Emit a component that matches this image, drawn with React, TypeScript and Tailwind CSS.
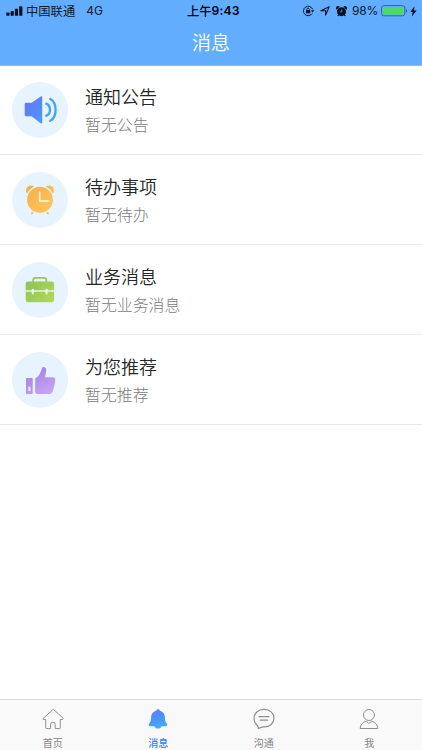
import React from 'react';

const cjk = "font-['Liberation_Sans','Noto_Sans_CJK_SC',sans-serif]";

function StatusBar() {
  return (
    <div className="relative flex h-[22px] items-center justify-between pl-[6px] pr-[5px] text-[12px] leading-[22px] text-[#0b1a2b]">
      <div className="flex items-center">
        <svg width="17" height="10" viewBox="0 0 17 10" fill="#05101c">
          <rect x="0.3" y="6.4" width="3.2" height="3.4" rx="0.9" />
          <rect x="4.6" y="4.9" width="3.2" height="4.9" rx="0.9" />
          <rect x="8.9" y="2.8" width="3.2" height="7" rx="0.9" />
          <rect x="13.2" y="0.3" width="3.2" height="9.5" rx="0.9" />
        </svg>
        <span className="ml-[3px] pt-[2px] text-[12.3px] leading-5">中国联通</span>
        <span className="ml-[11px] font-['Inter',sans-serif] text-[12px]">4G</span>
      </div>
      <div className="absolute left-[187px] top-0 flex font-medium text-black">
        <span className="pt-[2px] text-[12.3px] leading-5">上午</span>
        <span className="font-['Inter',sans-serif] text-[12.2px] font-semibold tracking-[0.15px]">9:43</span>
      </div>
      <div className="flex items-center">
        <svg width="13" height="12" viewBox="0 0 13 12" fill="none" stroke="#05101c">
          <path d="M10.6 4.4A4.7 4.7 0 1 0 10.2 8.4" />
          <path d="M8.9 5.3h3.4l-1.7 2.2z" fill="#05101c" stroke="none" />
          <rect x="4" y="5.1" width="4.2" height="3.2" fill="#05101c" stroke="none" />
          <path d="M4.9 5.2V4.3a1.2 1.2 0 0 1 2.4 0v.9" strokeWidth=".8" />
        </svg>
        <svg className="ml-[5px]" width="10" height="10" viewBox="0 0 10 10" fill="none" stroke="#05101c" strokeWidth="1.1" strokeLinejoin="round">
          <path d="M9.2.8 5.6 9.1V4.7H.9z" />
        </svg>
        <svg className="ml-[6px]" width="11" height="11" viewBox="0 0 12 12" fill="#05101c">
          <circle cx="6" cy="6.2" r="4.9" />
          <path d="M.6 4A2.2 2.2 0 0 1 4 .8zM11.4 4A2.2 2.2 0 0 0 8 .8zM2.200 9.200l1.300 1-1 1-1-.6zM9.800 9.200l-1.300 1 1 1 1-.6z" />
          <path d="M6.300 3.700v2.700H4.300" fill="none" stroke="#63adff" strokeWidth=".9" />
        </svg>
        <span className="ml-[5px] font-['Inter',sans-serif] text-[12px] tracking-[-0.25px]">98%</span>
        <svg className="ml-[3px]" width="27" height="12" viewBox="0 0 27 12">
          <rect x=".5" y=".6" width="23.4" height="10.2" rx="2.4" fill="none" stroke="#2f5f92" strokeWidth=".9" />
          <rect x="1.9" y="1.9" width="20.6" height="7.6" rx="1.2" fill="#4cd964" />
          <path d="M25 3.9c1.4.5 1.4 3.1 0 3.6z" fill="#2f5f92" />
        </svg>
        <svg className="ml-[2px]" width="7" height="11" viewBox="0 0 7 11" fill="#05101c">
          <path d="M4.400.300.400 6h2.300l-.9 4.600L6.700 4.600H4z" />
        </svg>
      </div>
    </div>
  );
}

function SpeakerIcon() {
  return (
    <svg width="56" height="56" viewBox="0 0 56 56">
      <defs>
        <linearGradient id="speaker" x1="12" y1="18" x2="45" y2="36" gradientUnits="userSpaceOnUse">
          <stop stopColor="#6a78f5" />
          <stop offset=".5" stopColor="#548cf8" />
          <stop offset="1" stopColor="#38b4ff" />
        </linearGradient>
      </defs>
      <path d="M14 20.8h5.7L28.6 14.5q1.6-.9 1.6.9v25q0 1.800-1.600.9L19.700 34.200H14q-1.300 0-1.300-1.300V22.100q0-1.300 1.300-1.300z" fill="url(#speaker)" />
      <path d="M34.300 21.700c4.900 2 4.900 10 0 12M38.300 17c7 4 7 17.800 0 21.800" fill="none" stroke="#45a2fc" strokeWidth="2.400" strokeLinecap="round" />
    </svg>
  );
}

function ClockIcon() {
  return (
    <svg width="56" height="56" viewBox="0 0 56 56">
      <defs>
        <linearGradient id="clock" x1="16" y1="16" x2="40" y2="42" gradientUnits="userSpaceOnUse">
          <stop stopColor="#f8b04b" />
          <stop offset="1" stopColor="#ffc85a" />
        </linearGradient>
      </defs>
      <g fill="url(#clock)">
        <circle cx="18.900" cy="18.500" r="4.900" />
        <circle cx="37.100" cy="18.500" r="4.900" />
      </g>
      <path d="m21.800 39-1.900 2.600M34.200 39l1.900 2.600" stroke="#fbbb52" strokeWidth="1.700" strokeLinecap="round" />
      <circle cx="28" cy="27.800" r="13.600" fill="url(#clock)" stroke="#e7f4ff" strokeWidth="1.300" />
      <path d="M27.700 20v9.100H37" fill="none" stroke="#fff7e6" strokeWidth="1.600" strokeLinecap="round" strokeLinejoin="round" />
    </svg>
  );
}

function BriefcaseIcon() {
  return (
    <svg width="56" height="56" viewBox="0 0 56 56">
      <defs>
        <linearGradient id="case" x1="14" y1="18" x2="40" y2="42" gradientUnits="userSpaceOnUse">
          <stop stopColor="#8cc455" />
          <stop offset="1" stopColor="#b2d957" />
        </linearGradient>
      </defs>
      <path d="M21.100 20v-1.700q0-2.400 2.400-2.400h8.500q2.400 0 2.400 2.400V20" fill="none" stroke="#95ca55" strokeWidth="1.700" />
      <rect x="13.700" y="19.500" width="28.400" height="20.700" rx="2.400" fill="url(#case)" />
      <path d="M13.500 29h28.800" stroke="#eaf6ef" strokeWidth="1.400" />
      <path d="M20.800 27.700v3.700M34.500 27.700v3.700" stroke="#eff9f0" strokeWidth="2.100" strokeLinecap="round" />
    </svg>
  );
}

function ThumbIcon() {
  return (
    <svg width="56" height="56" viewBox="0 0 56 56">
      <defs>
        <linearGradient id="thumb" x1="22" y1="18" x2="36" y2="43" gradientUnits="userSpaceOnUse">
          <stop stopColor="#a585e6" />
          <stop offset="1" stopColor="#c7a5f5" />
        </linearGradient>
      </defs>
      <path fillRule="evenodd" d="M14.700 26h5.300q.7 0 .7.700v14.600q0 .7-.7.700h-5.300q-.7 0-.7-.7V26.700q0-.7.700-.7zm1.700 8.700v4.300h2v-4.300z" fill="url(#thumb)" />
      <path d="M23.200 26.200c3.500-1.300 5.500-5.400 6.700-10 .8-2.300 4.500-1.500 4.300 1.600-.1 2.700-.8 5.200-1.100 7.400h7.800c1.800 0 2.600 1.200 2.400 2.700-.5 4.200-1.300 8-2.800 11.900-.5 1.400-1.500 2.100-3 2.100H25q-1.800 0-1.800-1.800z" fill="url(#thumb)" />
    </svg>
  );
}

const messages = [
  { title: '通知公告', note: '暂无公告', Icon: SpeakerIcon },
  { title: '待办事项', note: '暂无待办', Icon: ClockIcon },
  { title: '业务消息', note: '暂无业务消息', Icon: BriefcaseIcon },
  { title: '为您推荐', note: '暂无推荐', Icon: ThumbIcon },
];

const line = { fill: 'none', stroke: '#8f8f8f', strokeWidth: 1, strokeLinejoin: 'round', strokeLinecap: 'round' } as const;

const tabs = [
  {
    label: '首页',
    active: false,
    icon: (
      <svg width="22" height="22" viewBox="0 0 22 22" {...line}>
        <path d="M11 1.500.9 10.700l.6.800h2.200v8.300q0 .8.800.8h4.100v-4.200a2.300 2.300 0 0 1 4.600 0v4.200h4.300q.8 0 .8-.8v-8.300h2.200l.6-.8z" />
      </svg>
    ),
  },
  {
    label: '消息',
    active: true,
    icon: (
      <svg width="22" height="22" viewBox="0 0 22 22">
        <defs>
          <linearGradient id="bell" x1="8" y1="1" x2="13" y2="21" gradientUnits="userSpaceOnUse">
            <stop stopColor="#6080fb" />
            <stop offset=".5" stopColor="#4b94fb" />
            <stop offset="1" stopColor="#43b0ff" />
          </linearGradient>
        </defs>
        <path d="M11 1.200c1.100 0 1.700.6 1.900 1.500 3.500 1 4.900 3.500 5 6.500.1 3.300.3 4.700 1.900 6.300.9.900.4 2.800-.9 2.800h-4.300c-.6 1.500-1.800 2.300-3.600 2.300s-3-.8-3.600-2.300H3.100c-1.300 0-1.800-1.900-.9-2.800 1.600-1.600 1.800-3 1.900-6.300.1-3 1.500-5.500 5-6.500.2-.9.800-1.500 1.900-1.500z" fill="url(#bell)" />
      </svg>
    ),
  },
  {
    label: '沟通',
    active: false,
    icon: (
      <svg width="22" height="22" viewBox="0 0 22 22" {...line} strokeWidth={1.200}>
        <path d="M5.400 20.500c-.1-1.600-.5-2.700-1.500-3.500C2 15.400 1 13.200 1 10.400 1 5.200 5.200 1.400 11 1.400s10 3.800 10 8.800-4.200 8.700-10 8.700c-2.300 0-3.800.5-5.600 1.600zM6 8.600h10M7.300 12.200h7.200" />
      </svg>
    ),
  },
  {
    label: '我',
    active: false,
    icon: (
      <svg width="22" height="22" viewBox="0 0 22 22" {...line}>
        <circle cx="11" cy="7" r="5.500" />
        <path d="M8 13.300c-3.400 1-5.500 3.400-5.900 7.200h17.800c-.4-3.800-2.500-6.200-5.900-7.200L11 15.200z" />
      </svg>
    ),
  },
];

export default function App() {
  return (
    <div className={`flex h-[750px] w-[422px] flex-col overflow-hidden bg-white ${cjk}`}>
      <header className="h-[66px] shrink-0 border-b border-[#84bdfd] bg-[#63adff]">
        <StatusBar />
        <h1 className="pt-[2px] text-center text-[19px] font-[350] leading-[40px] text-white">消息</h1>
      </header>
      <main className="-mt-px flex-1">
        {messages.map(({ title, note, Icon }) => (
          <div key={title} className="flex h-[90px] items-center border-b border-[#e9e9e9] pl-3">
            <div className="mt-px size-14 shrink-0 rounded-full bg-[#e7f4ff]">
              <Icon />
            </div>
            <div className="ml-[17px] flex flex-col pt-[4px]">
              <span className="text-[18px] font-[350] leading-7 text-[#262626]">{title}</span>
              <span className="text-[15.9px] font-light leading-7 text-[#7c7c7c]">{note}</span>
            </div>
          </div>
        ))}
      </main>
      <nav className="grid h-[51px] shrink-0 grid-cols-4 border-t border-[#dcdcdc] bg-[#f9f9f9]">
        {tabs.map(({ label, active, icon }) => (
          <div key={label} className="flex flex-col items-center pt-2">
            {icon}
            <span className={`mt-[6px] text-[10px] leading-[16px] ${active ? 'font-medium text-[#2a86fa]' : 'text-[#858585]'}`}>{label}</span>
          </div>
        ))}
      </nav>
    </div>
  );
}
